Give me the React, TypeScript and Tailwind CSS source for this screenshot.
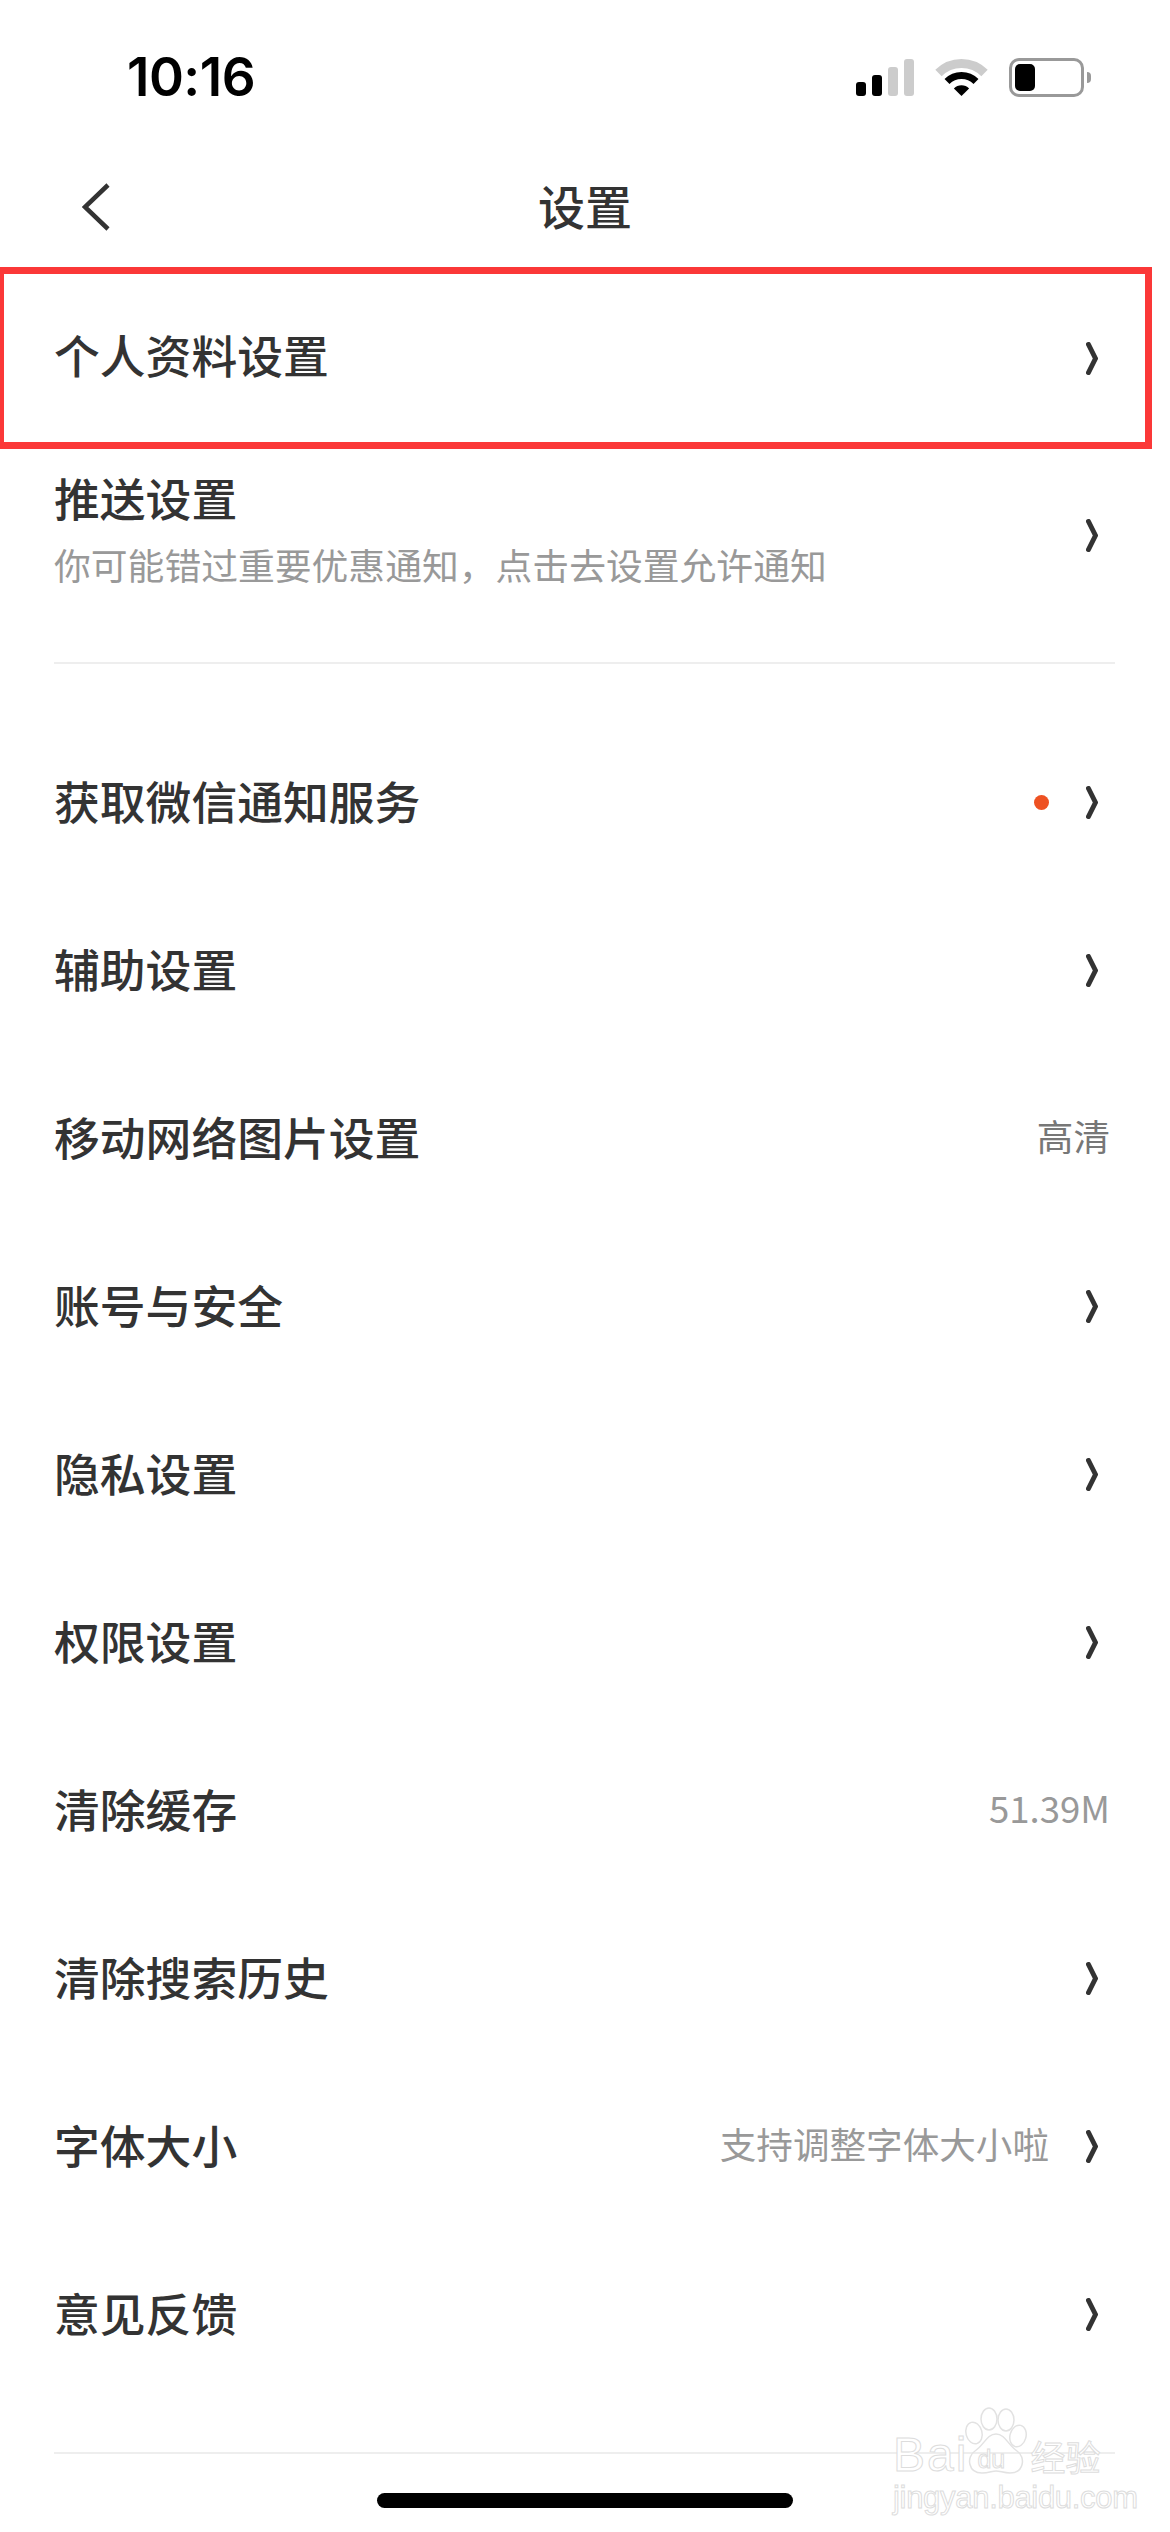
const cjk = "font-['PingFang_SC','Noto_Sans_CJK_SC','Inter',sans-serif]";

function Chevron() {
  return (
    <svg width="12" height="33" viewBox="0 0 12 33" fill="none" className="shrink-0">
      <path d="M2.5 2.5 L9.5 16.5 L2.5 30.5" stroke="#333333" strokeWidth="5" strokeLinecap="round" strokeLinejoin="miter" />
    </svg>
  );
}

function StatusBar() {
  return (
    <div className="h-[147px] pt-[58px]">
      <div className="flex h-[39px] items-center justify-between pl-[127px] pr-[79px]">
        <span className="font-['Inter',sans-serif] text-[53px] leading-none font-semibold tracking-[-0.5px] text-black">10:16</span>
        <div className="flex items-center gap-[22px]">
          <div className="flex items-end gap-[6px]">
            <div className="h-[14px] w-[10px] rounded-[3px] bg-black" />
            <div className="h-[21px] w-[10px] rounded-[3px] bg-black" />
            <div className="h-[29px] w-[10px] rounded-[3px] bg-[#cccccc]" />
            <div className="h-[37px] w-[10px] rounded-[3px] bg-[#cccccc]" />
          </div>
          <svg width="51" height="37" viewBox="0 0 51 37" fill="none" className="overflow-visible">
            <path d="M2.5 14 A32.5 32.5 0 0 1 48.5 14" stroke="#cccccc" strokeWidth="9" />
            <path d="M11 22.5 A20.5 20.5 0 0 1 40 22.5" stroke="#000000" strokeWidth="7" />
            <path d="M25.5 37 L17.9 29.4 A10.7 10.7 0 0 1 33.1 29.4 Z" fill="#000000" />
          </svg>
          <div className="flex items-center gap-[3px]">
            <div className="h-[39px] w-[75px] rounded-[10px] border-[3px] border-[#999999] p-[3px]">
              <div className="h-full w-[20px] rounded-[5px] bg-black" />
            </div>
            <div className="h-[11px] w-[4px] rounded-r-full bg-[#999999]" />
          </div>
        </div>
      </div>
    </div>
  );
}

function Row({ label, value, valueClass, dot, chevron = true }: { label: string; value?: string; valueClass?: string; dot?: boolean; chevron?: boolean }) {
  return (
    <div className={`flex h-[168px] items-center justify-between pl-[54px] ${chevron ? "pr-[72px]" : "pr-[60px]"}`}>
      <span className="mb-[3px] text-[45.8px] leading-none font-medium text-[#333333]">{label}</span>
      <div className="flex items-center">
        {value && <span className={`mb-[3px] text-[36.6px] leading-none ${valueClass ?? "text-[#999999]"}`}>{value}</span>}
        {dot && <div className="h-[15px] w-[15px] rounded-full bg-[#ee5122]" />}
        {chevron && <div className={value ? "ml-[37px]" : dot ? "ml-[37px]" : ""}><Chevron /></div>}
      </div>
    </div>
  );
}

function Watermark() {
  return (
    <div className="absolute left-[893px] top-[2405px] flex w-[215px] flex-col text-white [-webkit-text-stroke:1px_#dddddd] font-['Liberation_Sans',sans-serif]">
      <div className="flex h-[70px] items-end">
        <span className="text-[48px] leading-[40px] tracking-[2px]">Bai</span>
        <div className="relative -ml-[4px] h-[68px] w-[64px] shrink-0">
          <svg width="64" height="68" viewBox="0 0 64 68" fill="none" stroke="#e2e2e2" strokeWidth="1.5">
            <ellipse cx="10" cy="26" rx="8" ry="11" transform="rotate(-15 10 26)" />
            <ellipse cx="25" cy="12" rx="8" ry="11" />
            <ellipse cx="42" cy="13" rx="8" ry="11" />
            <ellipse cx="54" cy="29" rx="8" ry="11" transform="rotate(15 54 29)" />
            <path d="M32 27 C23 27 20 38 11 44 C2 50 4 66 18 66 C25 66 28 64 32 64 C36 64 40 66 46 66 C60 66 62 50 53 44 C44 38 41 27 32 27 Z" />
          </svg>
          <span className="absolute left-[13px] top-[40px] text-[25px] leading-none">du</span>
        </div>
        <span className={`ml-[2px] text-[35px] leading-[38px] ${cjk}`}>经验</span>
      </div>
      <span className="mt-[8px] text-[31px] leading-[30px] tracking-[-0.3px] whitespace-nowrap">jingyan.baidu.com</span>
    </div>
  );
}

const rows: { label: string; value?: string; valueClass?: string; dot?: boolean; chevron?: boolean }[] = [
  { label: "获取微信通知服务", dot: true },
  { label: "辅助设置" },
  { label: "移动网络图片设置", value: "高清", valueClass: "text-[#777777]", chevron: false },
  { label: "账号与安全" },
  { label: "隐私设置" },
  { label: "权限设置" },
  { label: "清除缓存", value: "51.39M", chevron: false },
  { label: "清除搜索历史" },
  { label: "字体大小", value: "支持调整字体大小啦" },
  { label: "意见反馈" },
];

export default function App() {
  return (
    <div className={`relative h-[2532px] w-[1170px] overflow-hidden bg-white ${cjk}`}>
      <StatusBar />

      <div className="grid h-[120px] grid-cols-[1fr_auto_1fr] items-center">
        <div className="pl-[82px]">
          <svg width="28" height="48" viewBox="0 0 28 48" fill="none">
            <path d="M26 2 L3 24 L26 46" stroke="#333333" strokeWidth="4.5" />
          </svg>
        </div>
        <h1 className="mb-[6px] text-[47px] leading-none font-medium text-[#333333]">设置</h1>
        <div />
      </div>

      {/* red highlight around the first row */}
      <div className="-ml-[3px] flex h-[182px] w-[1155px] items-center justify-between border-[7px] border-[#fb3838] pl-[50px] pr-[47px]">
        <span className="mb-[6px] text-[45.8px] leading-none font-medium text-[#333333]">个人资料设置</span>
        <Chevron />
      </div>

      <div className="flex h-[213px] items-start justify-between pl-[54px] pr-[72px] pt-[26px]">
        <div>
          <div className="text-[45.8px] leading-none font-medium text-[#333333]">推送设置</div>
          <div className="mt-[25px] text-[36.8px] leading-[36px] text-[#999999]">你可能错过重要优惠通知，点击去设置允许通知</div>
        </div>
        <div className="mt-[44px]"><Chevron /></div>
      </div>

      <div className="ml-[54px] h-[2px] w-[1061px] bg-[#eeeeee]" />

      <div className="mt-[54px]">
        {rows.map((r) => (
          <Row key={r.label} {...r} />
        ))}
      </div>

      <div className="ml-[54px] mt-[54px] h-[2px] w-[1061px] bg-[#eeeeee]" />

      <div className="mt-[39px] flex justify-center">
        <div className="h-[15px] w-[416px] rounded-full bg-black" />
      </div>

      <Watermark />
    </div>
  );
}
